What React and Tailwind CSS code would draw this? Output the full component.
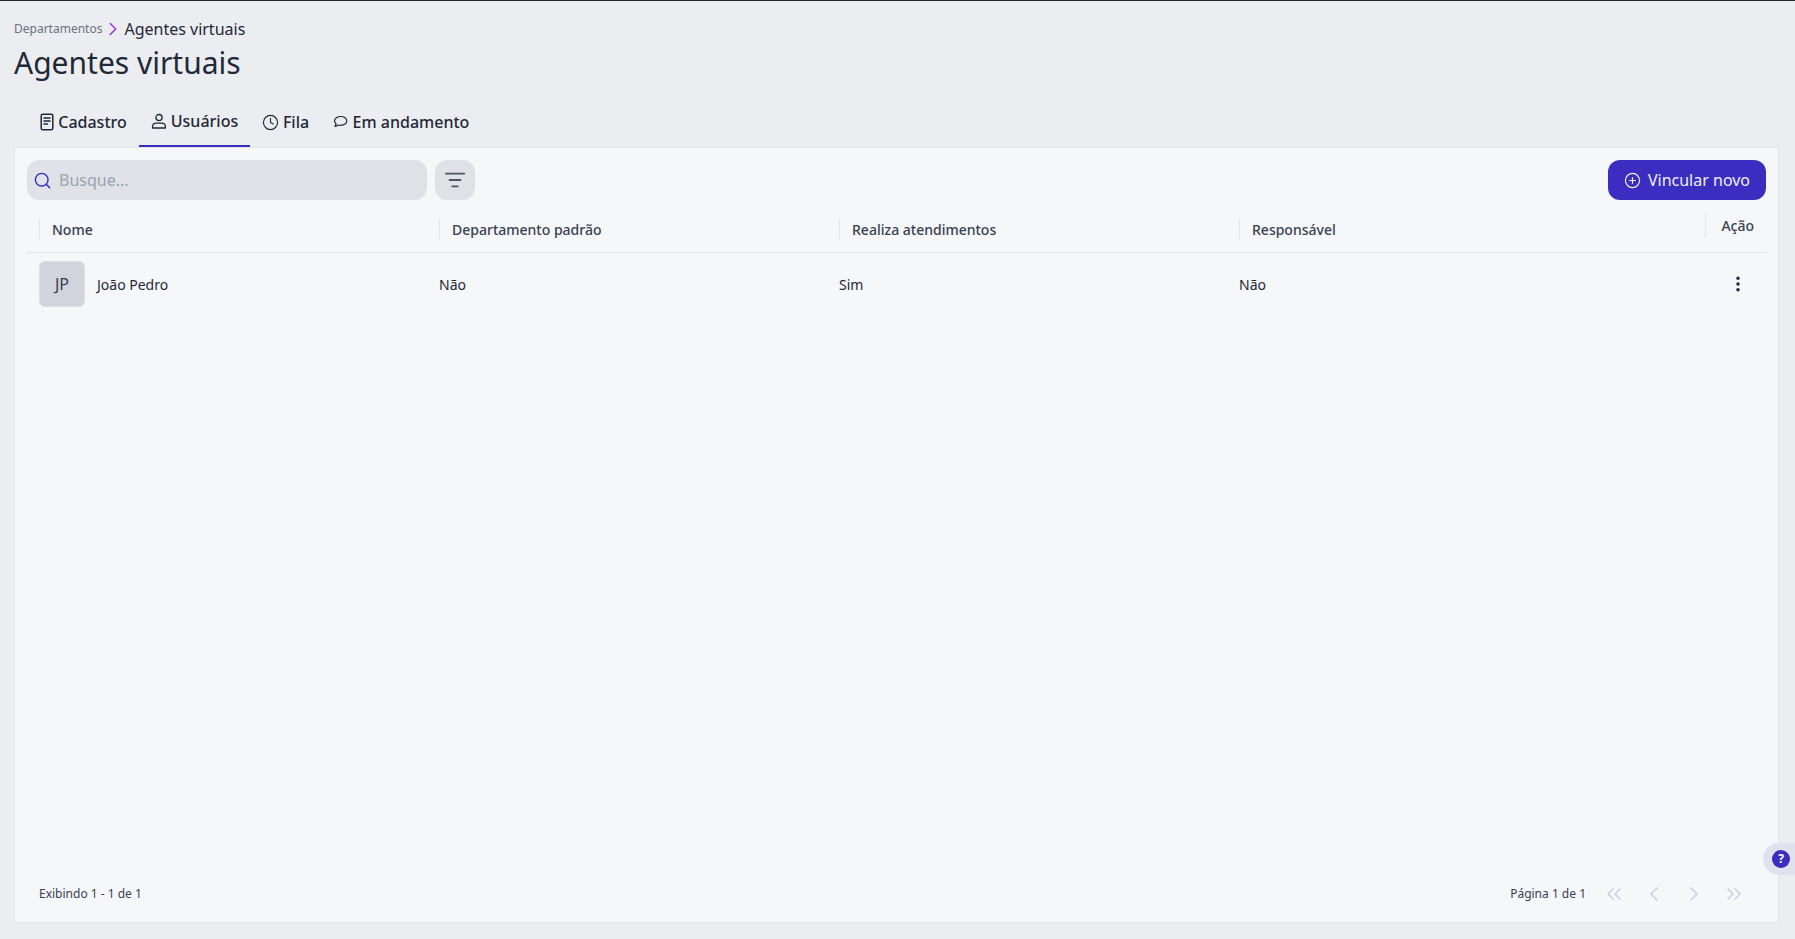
import { Clock, Search, ListFilter, CirclePlus, EllipsisVertical, ChevronsLeft, ChevronLeft, ChevronRight, ChevronsRight } from 'lucide-react';

const DocIcon = () => (
  <svg width="16" height="18" viewBox="0 0 16 18" fill="none" stroke="currentColor" strokeWidth="1.5" strokeLinecap="round">
    <rect x="2.2" y="1.2" width="11.6" height="15.6" rx="1.6" />
    <path d="M5 5h6M5 8h6M5 11h3.5" />
  </svg>
);

const UserIcon = () => (
  <svg width="16" height="16" viewBox="0 0 16 16" fill="none" stroke="currentColor" strokeWidth="1.3" strokeLinejoin="round">
    <circle cx="8" cy="4.6" r="3.1" />
    <path d="M1.6 15v-1.2c0-2.2 1.7-3.6 3.8-3.6h5.2c2.100 0 3.800 1.400 3.800 3.600V15z" />
  </svg>
);

const ChatIcon = () => (
  <svg width="15" height="14" viewBox="0 0 15 14" fill="none" stroke="currentColor" strokeWidth="1.2" strokeLinejoin="round">
    <path d="M7.800 1.500c3.300 0 6 1.900 6 4.400s-2.700 4.400-6 4.400c-.8 0-1.500-.1-2.200-.3-1 .8-2.300 1.300-3.800 1.300.7-.7 1.200-1.500 1.300-2.400C1.900 7.500 1.500 6.700 1.500 5.900c0-2.500 3-4.400 6.300-4.400z" />
  </svg>
);

const Tab = ({ icon, label, active, width, gap }) => (
  <div className={`flex h-[47px] items-center justify-center border-b-2 text-[16px] font-medium text-[#1f2937] ${gap} ${width} ${active ? 'border-[#3b2dbf] pb-[3px]' : 'border-transparent pb-[1px]'}`}>
    {icon}
    <span>{label}</span>
  </div>
);

const HeaderCell = ({ label }) => (
  <div className="flex h-5 w-[400px] items-center border-l border-[#e2e4ea] pl-3 text-[14px] font-medium text-[#374151]">
    {label}
  </div>
);

const PageButton = ({ icon: Icon }) => (
  <div className="flex w-10 justify-center text-[#c9cbdc]">
    <Icon size={24} strokeWidth={1.4} />
  </div>
);

export default function App() {
  return (
    <div className="relative flex h-[939px] flex-col overflow-hidden border-t border-[#23252b] bg-[#ecedf1] pr-4 pb-4 pl-[14px] font-['Noto_Sans',sans-serif] text-[#1f2937]">
      {/* Breadcrumb */}
      <div className="mt-[17px] flex h-[22px] items-center">
        <span className="text-[12px] text-[#6b7280]">Departamentos</span>
        <ChevronRight size={22} strokeWidth={1.6} className="text-[#9333ea]" />
        <span className="text-[16px] text-[#1f2937]">Agentes virtuais</span>
      </div>
      <h1 className="mt-[2px] h-[42px] text-[30px] leading-[42px] font-normal text-[#1f2937]">Agentes virtuais</h1>

      {/* Tabs */}
      <div className="mt-[16px] flex items-center pl-[14px]">
        <Tab icon={<DocIcon />} label="Cadastro" width="w-[110px] mr-px" gap="gap-[3px]" />
        <Tab icon={<UserIcon />} label="Usuários" active width="w-[111px]" gap="gap-[4px]" />
        <Tab icon={<Clock size={17} strokeWidth={1.6} />} label="Fila" width="w-[71px]" gap="gap-[4px]" />
        <Tab icon={<ChatIcon />} label="Em andamento" width="w-[160px]" gap="gap-[5px]" />
      </div>

      {/* Card */}
      <div className="flex flex-1 flex-col border border-[#e2e4ea] bg-[#f5f7f9] px-3">
        <div className="mt-3 flex h-10 items-center justify-between">
          <div className="flex items-center gap-2">
            <div className="flex h-10 w-[400px] items-center gap-[7px] rounded-xl bg-[#e1e2e8] pl-[6px]">
              <Search size={19} strokeWidth={1.8} className="text-[#3b2dbf]" />
              <span className="text-[16px] text-[#9ca3af]">Busque...</span>
            </div>
            <div className="flex h-10 w-10 items-center justify-center rounded-xl bg-[#e1e2e8] text-[#4b5563]">
              <ListFilter size={22} strokeWidth={2} />
            </div>
          </div>
          <div className="flex h-10 w-[158px] items-center justify-center gap-[7px] rounded-xl bg-[#3b2dbf] text-[16px] text-[#eef0ff]">
            <CirclePlus size={17} strokeWidth={1.7} />
            <span>Vincular novo</span>
          </div>
        </div>

        {/* Table head */}
        <div className="relative flex h-[53px] items-center border-b border-[#e2e4ea] pl-3 pt-[6px]">
          <HeaderCell label="Nome" />
          <HeaderCell label="Departamento padrão" />
          <HeaderCell label="Realiza atendimentos" />
          <HeaderCell label="Responsável" />
          <div className="absolute top-[12px] right-[12px] flex h-[26px] items-center border-l border-[#e2e4ea] pl-[15px] text-[14px] font-medium text-[#374151]">
            Ação
          </div>
        </div>

        {/* Row */}
        <div className="flex h-[62px] items-center pl-3 text-[14px] text-[#1f2937]">
          <div className="flex w-[400px] items-center gap-3">
            <div className="flex h-[46px] w-[46px] items-center justify-center rounded-md border border-[#dcdee6] bg-[#d1d3dd] text-[16px] text-[#374151]">
              JP
            </div>
            <span>João Pedro</span>
          </div>
          <div className="w-[400px]">Não</div>
          <div className="w-[400px]">Sim</div>
          <div className="flex-1">Não</div>
          <EllipsisVertical size={20} strokeWidth={2.2} className="mr-[18px] text-[#1f2937]" />
        </div>

        {/* Footer */}
        <div className="mt-auto mb-[16px] flex h-6 items-center justify-between pl-3">
          <span className="text-[12px] text-[#374151]">Exibindo 1 - 1 de 1</span>
          <div className="mr-[12px] flex items-center">
            <span className="mr-2 text-[12px] text-[#374151]">Página 1 de 1</span>
            <PageButton icon={ChevronsLeft} />
            <PageButton icon={ChevronLeft} />
            <PageButton icon={ChevronRight} />
            <PageButton icon={ChevronsRight} />
          </div>
        </div>
      </div>

      {/* Help button */}
      <div className="absolute top-[842px] right-0 flex h-8 w-[32px] items-center rounded-l-full bg-[#e1e1f0] pl-[9px]">
        <div className="flex h-[18px] w-[18px] items-center justify-center rounded-full bg-[#3b2dbf] text-[12px] leading-none font-bold text-white">?</div>
      </div>
    </div>
  );
}
